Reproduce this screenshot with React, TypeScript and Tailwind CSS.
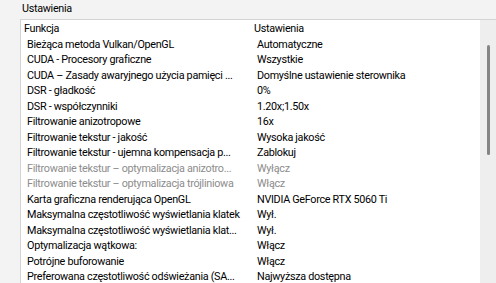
import React from "react";

type Row = { name: string; value: string; disabled?: boolean };

const rows: Row[] = [
  { name: "Bieżąca metoda Vulkan/OpenGL", value: "Automatyczne" },
  { name: "CUDA - Procesory graficzne", value: "Wszystkie" },
  { name: "CUDA – Zasady awaryjnego użycia pamięci ...", value: "Domyślne ustawienie sterownika" },
  { name: "DSR - gładkość", value: "0%" },
  { name: "DSR - współczynniki", value: "1.20x;1.50x" },
  { name: "Filtrowanie anizotropowe", value: "16x" },
  { name: "Filtrowanie tekstur - jakość", value: "Wysoka jakość" },
  { name: "Filtrowanie tekstur - ujemna kompensacja p...", value: "Zablokuj" },
  { name: "Filtrowanie tekstur – optymalizacja anizotro...", value: "Wyłącz", disabled: true },
  { name: "Filtrowanie tekstur – optymalizacja trójliniowa", value: "Włącz", disabled: true },
  { name: "Karta graficzna renderująca OpenGL", value: "NVIDIA GeForce RTX 5060 Ti" },
  { name: "Maksymalna częstotliwość wyświetlania klatek", value: "Wył." },
  { name: "Maksymalna częstotliwość wyświetlania klat...", value: "Wył." },
  { name: "Optymalizacja wątkowa:", value: "Włącz" },
  { name: "Potrójne buforowanie", value: "Włącz" },
  { name: "Preferowana częstotliwość odświeżania (SA...", value: "Najwyższa dostępna" },
];

export default function App() {
  return (
    <div className="w-[496px] h-[283px] overflow-hidden bg-[#f3f3f3] text-[10.8px] tracking-[-0.3px] text-black font-['Roboto',sans-serif]">
      {/* nagłówek grupy */}
      <div className="pl-[22px] pt-px h-[19px] leading-[15px]">Ustawienia</div>

      <div className="ml-[20px] w-[477px] flex bg-white border-t border-l border-[#d4d4d4]">
        <div className="flex-1 pt-px">
          <div className="flex h-[15.5px] leading-[15.5px]">
            <div className="w-[230px] pl-[3px]">Funkcja</div>
            <div className="pl-[3px]">Ustawienia</div>
          </div>
          {rows.map((r) => (
            <div
              key={r.name}
              className={`flex h-[15.5px] leading-[15.5px] whitespace-nowrap ${r.disabled ? "text-[#8c8c8c]" : ""}`}
            >
              <div className="w-[230px] pl-[6px] overflow-hidden">{r.name}</div>
              <div className="pl-[6px]">{r.value}</div>
            </div>
          ))}
        </div>

        {/* pasek przewijania */}
        <div className="w-[17px] h-[270px] bg-[#eeeeee] flex justify-center pt-[25px]">
          <div className="w-[3px] h-[110px] bg-[#858585] rounded-full" />
        </div>
      </div>
    </div>
  );
}
